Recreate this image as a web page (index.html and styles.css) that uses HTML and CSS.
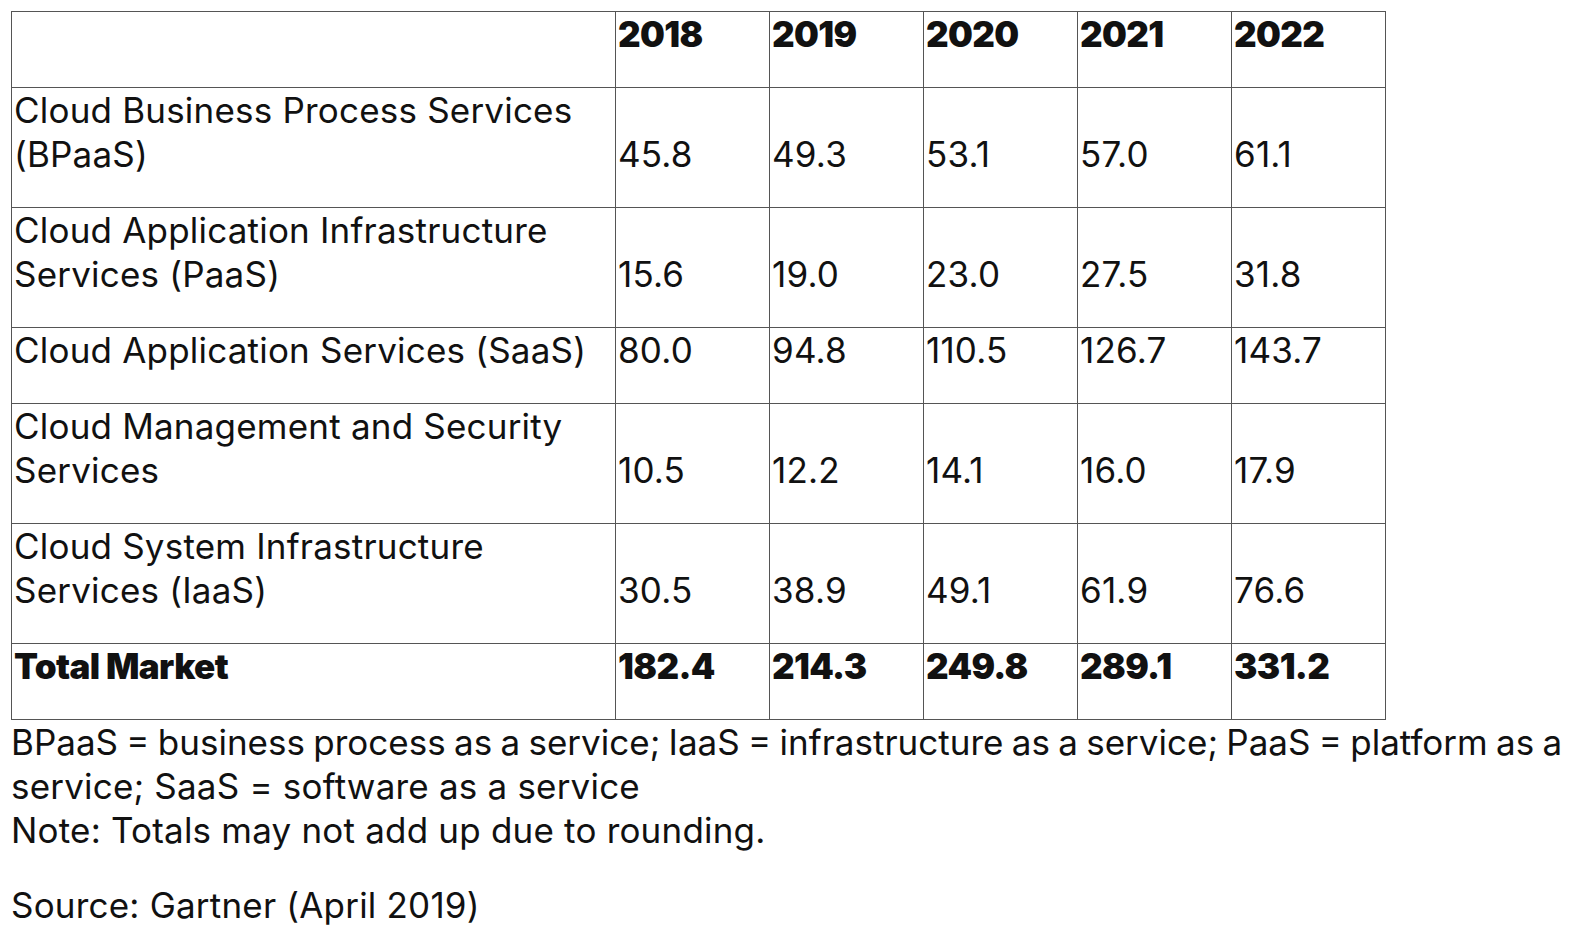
FILE: index.html
```html
<!DOCTYPE html>
<html>
<head>
<meta charset="utf-8">
<link rel="stylesheet" href="styles.css">
</head>
<body>
<table class="market">
  <colgroup>
    <col class="c-name">
    <col class="c-num"><col class="c-num"><col class="c-num"><col class="c-num"><col class="c-num">
  </colgroup>
  <tr class="head">
    <td></td><td>2018</td><td>2019</td><td>2020</td><td>2021</td><td>2022</td>
  </tr>
  <tr>
    <td>Cloud Business Process Services (BPaaS)</td><td>45.8</td><td>49.3</td><td>53.1</td><td>57.0</td><td>61.1</td>
  </tr>
  <tr>
    <td>Cloud Application Infrastructure Services (PaaS)</td><td>15.6</td><td>19.0</td><td>23.0</td><td>27.5</td><td>31.8</td>
  </tr>
  <tr>
    <td>Cloud Application Services (SaaS)</td><td>80.0</td><td>94.8</td><td>110.5</td><td>126.7</td><td>143.7</td>
  </tr>
  <tr>
    <td>Cloud Management and Security Services</td><td>10.5</td><td>12.2</td><td>14.1</td><td>16.0</td><td>17.9</td>
  </tr>
  <tr>
    <td>Cloud System Infrastructure Services (IaaS)</td><td>30.5</td><td>38.9</td><td>49.1</td><td>61.9</td><td>76.6</td>
  </tr>
  <tr class="total">
    <td>Total Market</td><td>182.4</td><td>214.3</td><td>249.8</td><td>289.1</td><td>331.2</td>
  </tr>
</table>
<p class="note first"><span class="line">BPaaS = business process as a service; IaaS = infrastructure as a service; PaaS = platform as a</span><br>service; SaaS = software as a service<br>Note: Totals may not add up due to rounding.</p>
<p class="note">Source: Gartner (April 2019)</p>
</body>
</html>
```
FILE: styles.css
```css
html, body {
  margin: 0;
  padding: 0;
  background: #fff;
}
html { overflow: hidden; }
body {
  padding: 11px 0 0 11px;
  font-family: Inter, "Noto Sans", sans-serif;
  font-size: 35px;
  line-height: 44px;
  letter-spacing: 0.2px;
  color: #111;
}
.market {
  border-collapse: collapse;
  width: 1374px;
  table-layout: fixed;
  border: 1px solid #444;
}
.c-name { width: 604px; }
.c-num { width: 154px; }
.market td {
  border: 1px solid #555;
  padding: 0 2px 31px 2px;
  vertical-align: bottom;
}
.market td:first-child { vertical-align: top; }
.head td, .total td {
  font-weight: 900;
  letter-spacing: -0.6px;
}
.note {
  margin: 0 0 31px 0;
  width: 1556px;
}
.line {
  white-space: nowrap;
  letter-spacing: 0;
  word-spacing: -1.5px;
}
```
